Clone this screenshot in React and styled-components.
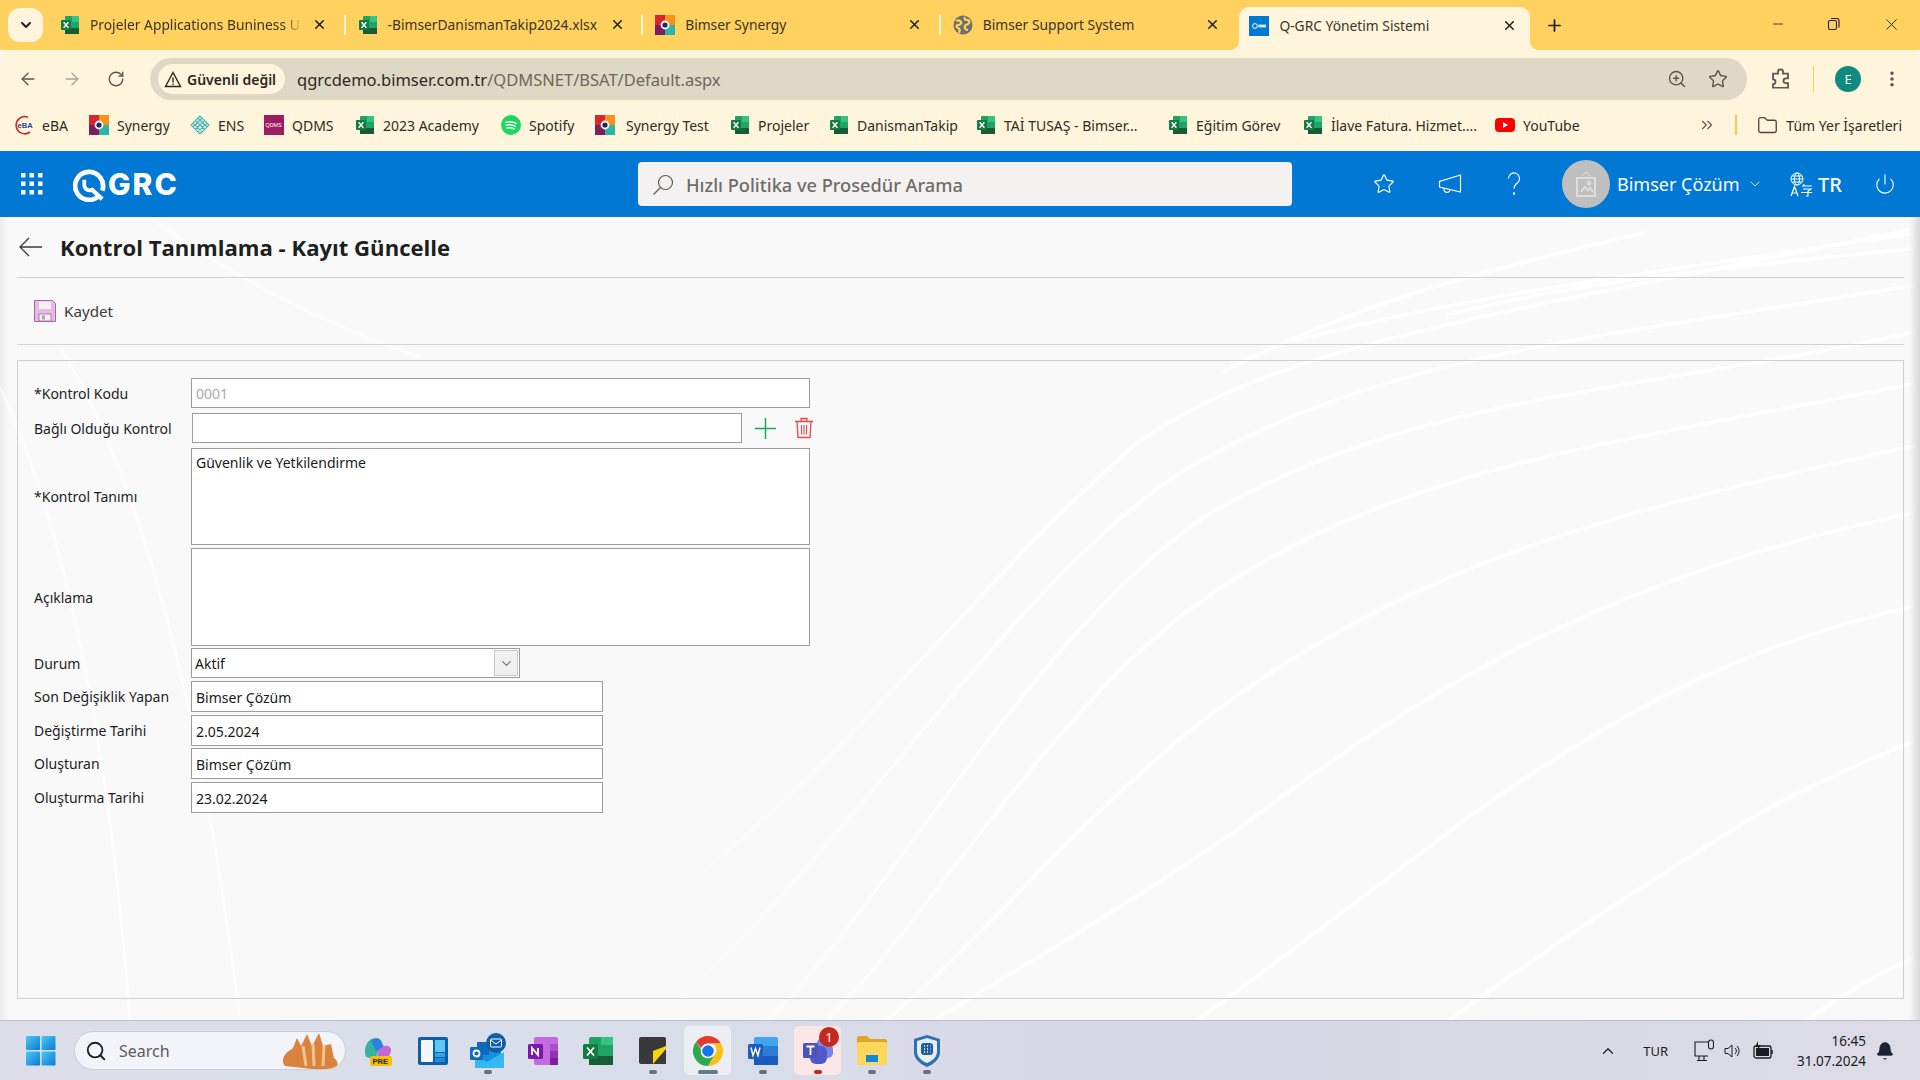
import styled, { createGlobalStyle } from "styled-components";
import { ArrowLeft, ArrowRight, RotateCw, Star, ZoomIn, EllipsisVertical, Folder, ChevronDown, ChevronsRight, ChevronUp, X, Plus, Minus, Power, Bell, Search } from "lucide-react";

const GlobalStyle = createGlobalStyle`
    html, body {
        margin: 0;
        padding: 0;
        width: 1920px;
        height: 1080px;
        overflow: hidden;
        background: #f9f9f9;
    }
    * { box-sizing: border-box; }
`

const chromeFont = `"Noto Sans", "Open Sans", sans-serif`;
const formFont = `"Noto Sans", "Open Sans", sans-serif`;

const Screen = styled.div`
    width: 1920px;
    height: 1080px;
    display: flex;
    flex-direction: column;
    overflow: hidden;
    font-family: ${chromeFont};
    color: #26241f;
`

/* browser tabs */
const TabStrip = styled.div`
    height: 50px;
    flex: none;
    display: flex;
    align-items: flex-end;
    background: #ffd15f;
`

const TabSearch = styled.div`
    width: 35px;
    height: 34px;
    margin: 0 5px 8px 8px;
    border-radius: 12px;
    background: #fff4dc;
    display: flex;
    align-items: center;
    justify-content: center;
`

const Tab = styled.div`
    width: 295.6px;
    height: 43px;
    padding: 0 14px 8px 12px;
    display: flex;
    align-items: center;
    font-size: 13.8px;
`

const TabTitle = styled.span`
    flex: 1;
    min-width: 0;
    margin-left: 10px;
    white-space: nowrap;
    color: #3b3428;
    ${( props ) => props.$fade && `
        margin-right: 10px;
        -webkit-mask-image: linear-gradient(90deg, #000 92%, rgba(0, 0, 0, .15) 100%);
        mask-image: linear-gradient(90deg, #000 92%, rgba(0, 0, 0, .15) 100%);
    `}
`

const TabClose = styled.span`
    width: 20px;
    height: 20px;
    flex: none;
    display: flex;
    align-items: center;
    justify-content: center;
`

const TabSep = styled.span`
    width: 2px;
    height: 20px;
    flex: none;
    margin-bottom: 15px;
    background: #fff4dc;
`

const ActiveTab = styled.div`
    width: 291px;
    height: 43px;
    margin-left: 3px;
    padding: 0 11px 6px 10px;
    display: flex;
    align-items: center;
    position: relative;
    font-size: 13.8px;
    background: #fff4dc;
    border-radius: 10px 10px 0 0;

    &::before, &::after {
        content: '';
        position: absolute;
        bottom: 0;
        width: 10px;
        height: 10px;
    }
    &::before {
        left: -10px;
        background: radial-gradient(circle at 0 0, transparent 10px, #fff4dc 10.5px);
    }
    &::after {
        right: -10px;
        background: radial-gradient(circle at 100% 0, transparent 10px, #fff4dc 10.5px);
    }
`

const NewTab = styled.span`
    width: 24px;
    height: 24px;
    margin: 0 0 13px 12px;
    display: flex;
    align-items: center;
    justify-content: center;
`

const WindowButtons = styled.div`
    margin-left: auto;
    display: flex;
    height: 50px;
`

const WindowButton = styled.span`
    width: ${( props ) => props.$w || 56}px;
    display: flex;
    align-items: center;
    justify-content: center;
    padding-bottom: 2px;
`

/* address bar */
const Toolbar = styled.div`
    height: 58px;
    flex: none;
    padding-top: 8px;
    display: flex;
    align-items: flex-start;
    background: #fff4dc;
    border-radius: 8px 8px 0 0;
`

const NavButton = styled.span`
    width: 44px;
    height: 42px;
    flex: none;
    display: flex;
    align-items: center;
    justify-content: center;
    color: ${( props ) => props.$dim ? '#a8a294' : '#5c574b'};
`

const NavGroup = styled.div`
    display: flex;
    width: 150px;
    padding-left: 6px;
`

const Omnibox = styled.div`
    width: 1597px;
    height: 42px;
    flex: none;
    display: flex;
    align-items: center;
    padding-left: 8px;
    border-radius: 21px;
    background: #dfd8c5;
`

const SecurityChip = styled.div`
    width: 127px;
    height: 30px;
    flex: none;
    display: flex;
    align-items: center;
    gap: 5px;
    padding-left: 6px;
    border-radius: 15px;
    background: #fff4dc;
    font-size: 14px;
    font-weight: 600;
    color: #2a261d;
`

const Url = styled.div`
    margin-left: 12px;
    font-size: 16.5px;
    color: #6c675a;
    white-space: nowrap;

    & b {
        font-weight: 400;
        color: #2e2a22;
    }
`

const OmniIcons = styled.div`
    margin-left: auto;
    display: flex;
    align-items: center;
    gap: 21px;
    padding-right: 19px;
    color: #5c574b;
`

const ToolIcons = styled.div`
    flex: 1;
    display: flex;
    align-items: center;
    height: 42px;
    padding-left: 22px;
    color: #5c574b;
`

const ToolDivider = styled.span`
    width: 1px;
    height: 26px;
    margin: 0 21px 0 20px;
    background: #f5c95f;
`

const ProfileBadge = styled.span`
    width: 26px;
    height: 26px;
    border-radius: 50%;
    background: #0f8a7c;
    color: #fff;
    font-size: 13px;
    display: flex;
    align-items: center;
    justify-content: center;
    margin-right: 21px;
`

/* bookmarks */
const BookmarkBar = styled.div`
    height: 43px;
    flex: none;
    display: flex;
    align-items: center;
    padding: 0 0 9px 14px;
    background: #fff4dc;
    font-size: 14px;
    color: #2f2b22;
`

const Bookmark = styled.div`
    width: ${( props ) => props.$w}px;
    flex: none;
    display: flex;
    align-items: center;
    gap: ${( props ) => props.$gap || 8}px;
    white-space: nowrap;
`

const BookmarkEnd = styled.div`
    margin-left: auto;
    display: flex;
    align-items: center;
    padding-right: 18px;
    white-space: nowrap;
    color: #2f2b22;
`

const BookmarkDivider = styled.span`
    width: 2px;
    height: 20px;
    margin: 0 20px 0 19px;
    background: #f7c958;
`

const FolderLabel = styled.span`
    margin-left: 8px;
`

/* application header */
const AppHeader = styled.header`
    height: 66px;
    flex: none;
    display: flex;
    align-items: center;
    padding-left: 21px;
    background: #0078d4;
    color: #fff;
`

const Logo = styled.div`
    display: flex;
    align-items: center;
    width: 104px;
    margin-left: 30px;
    gap: 2px;
    font-family: Inter, sans-serif;
    font-weight: 800;
    font-size: 30px;
    letter-spacing: 2px;
`

const SearchBox = styled.div`
    width: 654px;
    height: 44px;
    margin-left: 461px;
    padding-left: 14px;
    display: flex;
    align-items: center;
    gap: 12px;
    border-radius: 4px;
    background: #f3f2f1;
    color: #6e6c6a;
    font-size: 18.2px;
    font-weight: 500;
    padding-top: 1px;
`

const HeaderIcon = styled.span`
    display: flex;
    align-items: center;
    justify-content: center;
    margin-left: ${( props ) => props.$ml}px;
`

const Avatar = styled.span`
    width: 48px;
    height: 48px;
    margin-left: 41px;
    border-radius: 50%;
    background: #bfbfbf;
    display: flex;
    align-items: center;
    justify-content: center;
`

const UserName = styled.span`
    margin-left: 7px;
    width: 130px;
    font-size: 18px;
    white-space: nowrap;
`

const LangCode = styled.span`
    margin-left: 5px;
    width: 24px;
    font-size: 20px;
    font-weight: 500;
`

/* page */
const Page = styled.main`
    flex: 1;
    min-height: 0;
    position: relative;
    overflow: hidden;
    background:
        linear-gradient(90deg, #ececec 0, rgba(236, 236, 236, 0) 9px),
        #f9f9f9;

    &::after {
        content: '';
        position: absolute;
        top: 0;
        right: 0;
        bottom: 0;
        width: 11px;
        background: linear-gradient(270deg, #d9d9d9 0, #e4e4e4 4px, rgba(236, 236, 236, 0) 100%);
    }
`

const Waves = styled.svg`
    position: absolute;
    top: 0;
    left: 0;
    width: 1920px;
    height: 804px;
    fill: none;
    filter: blur(.5px);
`

const PageBody = styled.div`
    position: relative;
    z-index: 1;
    padding: 0 16px 0 17px;
`

const TitleRow = styled.div`
    height: 61px;
    display: flex;
    align-items: center;
    gap: 18px;
    padding: 0 0 1px 2px;
    border-bottom: 1px solid #d2d2d2;
`

const PageTitle = styled.h1`
    margin: 0;
    font-family: "Open Sans", sans-serif;
    font-size: 22.1px;
    font-weight: 700;
    color: #201f1e;
    white-space: nowrap;
`

const ActionRow = styled.div`
    height: 67px;
    display: flex;
    align-items: center;
    gap: 8px;
    padding-left: 17px;
    border-bottom: 1px solid #d2d2d2;
    font-size: 15.2px;
    color: #3d3c3a;
`

const FormPanel = styled.section`
    height: 639px;
    margin-top: 15px;
    padding: 17px 0 0 16px;
    border: 1px solid #cfcfcf;
    font-family: ${formFont};
    font-size: 14px;
    color: #1d1d1d;
`

const Row = styled.div`
    display: flex;
    align-items: center;
    height: ${( props ) => props.$h || 30}px;
    margin-top: ${( props ) => props.$mt || 0}px;
`

const Label = styled.label`
    width: 157px;
    flex: none;
    white-space: nowrap;
`

const Field = styled.div`
    width: ${( props ) => props.$w}px;
    height: 100%;
    margin-left: ${( props ) => props.$ml || 0}px;
    padding: ${( props ) => props.$multi ? '4px 4px' : '1px 4px 0'};
    display: flex;
    align-items: ${( props ) => props.$multi ? 'flex-start' : 'center'};
    border: 1px solid #9c9c9c;
    background: #fff;
    color: ${( props ) => props.$muted ? '#a9a9a9' : '#1a1a1a'};
    white-space: nowrap;
`

const SelectField = styled(Field)`
    position: relative;
    padding: 0 1px 0 3px;
    justify-content: space-between;
`

const SelectButton = styled.span`
    width: 24px;
    height: 26px;
    display: flex;
    align-items: center;
    justify-content: center;
    border: 1px solid #c9c9c9;
    background: #f0f0f0;
    color: #7a7a7a;
`

const RowIcon = styled.span`
    display: flex;
    margin-left: ${( props ) => props.$ml}px;
`

/* windows taskbar */
const Taskbar = styled.footer`
    height: 60px;
    flex: none;
    display: flex;
    align-items: center;
    padding-left: 26px;
    border-top: 1px solid #b9bacb;
    background: linear-gradient(90deg, #dcdfea 0%, #d9deea 30%, #d8d8e6 60%, #dcdbe7 100%);
`

const TaskSearch = styled.div`
    width: 272px;
    height: 39px;
    margin-left: 18px;
    padding-left: 10px;
    display: flex;
    align-items: center;
    gap: 12px;
    border-radius: 20px;
    background: #f3f4f9;
    border: 1px solid #c9ccd9;
    font-size: 16px;
    color: #5a5a5f;
    position: relative;
    overflow: hidden;
`

const Doodle = styled.svg`
    position: absolute;
    right: 0;
    top: 0;
`

const TaskApps = styled.div`
    display: flex;
    margin-left: 5px;
    height: 59px;
`

const TaskApp = styled.div`
    width: 54.9px;
    height: 59px;
    position: relative;
    display: flex;
    align-items: center;
    justify-content: center;

    &::before {
        content: '';
        display: ${( props ) => props.$tile ? 'block' : 'none'};
        position: absolute;
        left: 4px;
        right: 4px;
        top: 5px;
        bottom: 5px;
        border-radius: 5px;
        background: ${( props ) => props.$tile};
    }

    & > svg { position: relative; }
`

const RunDot = styled.span`
    position: absolute;
    left: 50%;
    bottom: 6px;
    width: ${( props ) => props.$w || 8}px;
    height: 4px;
    transform: translateX(-50%);
    border-radius: 2px;
    background: ${( props ) => props.$color || '#6b6f7b'};
`

const CountBadge = styled.span`
    position: absolute;
    top: 6px;
    right: 6px;
    width: 20px;
    height: 20px;
    border-radius: 50%;
    background: #c4281f;
    color: #fff;
    font-size: 13px;
    display: flex;
    align-items: center;
    justify-content: center;
`

const Tray = styled.div`
    margin-left: auto;
    display: flex;
    align-items: center;
    font-size: 13px;
    color: #1c1c22;
    padding-right: 25px;
`

const TrayText = styled.span`
    margin: 0 ${( props ) => props.$mr}px 0 ${( props ) => props.$ml}px;
`

const TrayIcon = styled.svg`
    margin-left: ${( props ) => props.$ml || 0}px;
`

const Clock = styled.div`
    margin: 0 9px 0 23px;
    text-align: right;
    line-height: 20px;
    font-size: 13.5px;
`

/* small drawings */
const IconSvg = styled.svg`
    flex: none;
`

const XlsIcon = ( { size = 20 } ) => (
    <IconSvg width={size} height={size} viewBox="0 0 20 20">
        <rect x="5" y="1" width="14" height="18" rx="1" fill="#21a366" />
        <rect x="12" y="1" width="7" height="6" fill="#33c481" />
        <rect x="5" y="13" width="14" height="6" fill="#185c37" />
        <rect x="1" y="5" width="10" height="10" rx="1" fill="#107c41" />
        <path d="M3.6 7.2 8.4 12.8M8.4 7.2 3.6 12.8" stroke="#fff" strokeWidth="1.4" />
    </IconSvg>
)

const SynergyIcon = () => (
    <IconSvg width="20" height="20" viewBox="0 0 20 20">
        <rect width="10" height="10" fill="#d8262c" />
        <rect x="10" width="10" height="10" fill="#f5921e" />
        <rect y="10" width="10" height="10" fill="#7a1f5c" />
        <rect x="10" y="10" width="10" height="10" fill="#2bb5a8" />
        <circle cx="10" cy="10" r="4.4" fill="#fff" />
        <circle cx="10" cy="10" r="2.6" fill="#1d2a55" />
    </IconSvg>
)

const EbaIcon = () => (
    <IconSvg width="20" height="20" viewBox="0 0 20 20">
        <path d="M14 2.2A8.6 8.6 0 1 0 16 17" fill="none" stroke="#c9252c" strokeWidth="1.6" />
        <text x="3.6" y="13" fontSize="7.6" fontWeight="700" fill="#1f4b8e" fontFamily="Liberation Sans">eBA</text>
    </IconSvg>
)

const EnsIcon = () => (
    <IconSvg width="20" height="20" viewBox="0 0 20 20" stroke="#3fb3bd" strokeWidth="1.1">
        <path d="M10 1 1 10l9 9 9-9zM5.5 5.5l9 9M8 3l9 9M3 8l9 9M14.5 5.5l-9 9M12 3l-9 9M17 8l-9 9" fill="none" />
    </IconSvg>
)

const QdmsIcon = () => (
    <IconSvg width="20" height="20" viewBox="0 0 20 20">
        <rect width="20" height="20" fill="#9b1d60" />
        <text x="1.5" y="12" fontSize="5.4" fill="#fff" fontFamily="Liberation Sans">QDMS</text>
    </IconSvg>
)

const SpotifyIcon = () => (
    <IconSvg width="20" height="20" viewBox="0 0 20 20">
        <circle cx="10" cy="10" r="10" fill="#1ed760" />
        <path d="M4.6 7.4c3.6-1 7.4-.7 10.6 1M5.3 10.3c3-.8 6.2-.5 8.9 1M6 13c2.4-.6 4.9-.3 7.1.9" fill="none" stroke="#fff" strokeWidth="1.5" strokeLinecap="round" />
    </IconSvg>
)

const YoutubeIcon = () => (
    <IconSvg width="20" height="20" viewBox="0 0 20 20">
        <rect y="3" width="20" height="14" rx="4" fill="#f00" />
        <path d="M8 7v6l5-3z" fill="#fff" />
    </IconSvg>
)

const GlobeIcon = () => (
    <IconSvg width="20" height="20" viewBox="0 0 20 20">
        <circle cx="10" cy="10" r="9.5" fill="#6f6f6f" />
        <path d="M3 6c2-1 4-.4 5 1s-1 3-3 3-2 2 0 3 2 3 1 5M12 2c-1 2 0 3 2 3s3 1 2 3-3 1-4 3 1 4 3 4" fill="none" stroke="#ffd15f" strokeWidth="2.2" />
    </IconSvg>
)

const GrcFavicon = () => (
    <IconSvg width="20" height="20" viewBox="0 0 20 20">
        <rect width="20" height="20" fill="#0078d4" />
        <circle cx="6" cy="10" r="2.4" fill="none" stroke="#fff" strokeWidth="1" />
        <rect x="9.4" y="8.6" width="7.6" height="2.8" fill="#dcecf8" />
    </IconSvg>
)

const bookmarks = [
    { icon: <EbaIcon />, text: 'eBA', w: 75 },
    { icon: <SynergyIcon />, text: 'Synergy', w: 101 },
    { icon: <EnsIcon />, text: 'ENS', w: 74 },
    { icon: <QdmsIcon />, text: 'QDMS', w: 91 },
    { icon: <XlsIcon />, text: '2023 Academy', w: 146 },
    { icon: <SpotifyIcon />, text: 'Spotify', w: 94 },
    { icon: <SynergyIcon />, text: 'Synergy Test', w: 135, gap: 11 },
    { icon: <XlsIcon />, text: 'Projeler', w: 99 },
    { icon: <XlsIcon />, text: 'DanismanTakip', w: 147 },
    { icon: <XlsIcon />, text: 'TAİ TUSAŞ - Bimser...', w: 192 },
    { icon: <XlsIcon />, text: 'Eğitim Görev', w: 135 },
    { icon: <XlsIcon />, text: 'İlave Fatura. Hizmet....', w: 192 },
    { icon: <YoutubeIcon />, text: 'YouTube', w: 100 },
];

const tabs = [
    { icon: <XlsIcon />, title: 'Projeler Applications Buniness U', fade: true },
    { icon: <XlsIcon />, title: '-BimserDanismanTakip2024.xlsx' },
    { icon: <SynergyIcon />, title: 'Bimser Synergy' },
    { icon: <GlobeIcon />, title: 'Bimser Support System' },
];

const fields = [
    { label: 'Son Değişiklik Yapan', value: 'Bimser Çözüm', mt: 3, h: 31 },
    { label: 'Değiştirme Tarihi', value: '2.05.2024', mt: 3, h: 31 },
    { label: 'Oluşturan', value: 'Bimser Çözüm', mt: 2, h: 31 },
    { label: 'Oluşturma Tarihi', value: '23.02.2024', mt: 3, h: 31 },
];

const wavePaths = [
    'M380 300C600 170 800 110 1100 30',
    'M500 240C800 150 1100 110 1568 30',
    'M760 190C1000 120 1300 90 1568 60',
    'M-900 1540C-400 1300 -150 820 230 440C480 240 850 190 1568 20',
    'M-600 1560C-300 1300 0 730 300 500C650 260 1000 240 1568 130',
    'M-400 1560C-200 1340 60 800 350 580C700 340 1100 340 1568 220',
    'M-300 1560C-150 1400 60 1000 300 780C640 480 1050 440 1568 320',
    'M-200 1560C-60 1440 180 1100 400 930C760 640 1100 560 1568 440',
    'M-120 1560C40 1450 220 1330 400 1190C760 880 1060 690 1568 570',
    'M330 1560C500 1420 660 1280 800 1160C1100 920 1300 820 1568 750',
    'M760 1560C900 1440 1100 1290 1300 1150C1400 1090 1480 1050 1568 1010',
    'M1370 1560C1440 1500 1500 1460 1568 1430',
];

export default function App () {
    return (
        <Screen>
            <GlobalStyle />
            <TabStrip>
                <TabSearch><ChevronDown size={16} strokeWidth={3} color="#1f1f1f" /></TabSearch>
                {tabs.map(( tab, i ) => (
                    <div key={tab.title} style={{ display: 'contents' }}>
                        <Tab>
                            {tab.icon}
                            <TabTitle $fade={tab.fade}>{tab.title}</TabTitle>
                            <TabClose><X size={15} strokeWidth={2.4} color="#1f1f1f" /></TabClose>
                        </Tab>
                        {i < 3 && <TabSep />}
                    </div>
                ))}
                <ActiveTab>
                    <GrcFavicon />
                    <TabTitle>Q-GRC Yönetim Sistemi</TabTitle>
                    <TabClose><X size={15} strokeWidth={2.4} color="#1f1f1f" /></TabClose>
                </ActiveTab>
                <NewTab><Plus size={19} strokeWidth={2.2} color="#1f1f1f" /></NewTab>
                <WindowButtons>
                    <WindowButton><Minus size={16} strokeWidth={1.2} color="#222" /></WindowButton>
                    <WindowButton>
                        <svg width="14" height="14" viewBox="0 0 14 14" fill="none" stroke="#222" strokeWidth="1.1">
                            <rect x="1.5" y="3.5" width="8" height="9" rx="1.5" />
                            <path d="M4 1.5h6a2 2 0 0 1 2 2v7" />
                        </svg>
                    </WindowButton>
                    <WindowButton $w={58}><X size={19} strokeWidth={1.2} color="#222" /></WindowButton>
                </WindowButtons>
            </TabStrip>

            <Toolbar>
                <NavGroup>
                    <NavButton><ArrowLeft size={20} strokeWidth={1.6} /></NavButton>
                    <NavButton $dim><ArrowRight size={20} strokeWidth={1.6} /></NavButton>
                    <NavButton><RotateCw size={18} strokeWidth={1.8} /></NavButton>
                </NavGroup>
                <Omnibox>
                    <SecurityChip>
                        <svg width="18" height="17" viewBox="0 0 18 17" fill="none" stroke="#2a261d" strokeWidth="1.4">
                            <path d="M9 1.5 1.5 15.5h15z" />
                            <path d="M9 6.5v5M9 12.5v1.4" />
                        </svg>
                        Güvenli değil
                    </SecurityChip>
                    <Url><b>qgrcdemo.bimser.com.tr</b>/QDMSNET/BSAT/Default.aspx</Url>
                    <OmniIcons>
                        <ZoomIn size={20} strokeWidth={1.7} />
                        <Star size={20} strokeWidth={1.7} />
                    </OmniIcons>
                </Omnibox>
                <ToolIcons>
                    <svg width="24" height="24" viewBox="0 0 24 24" fill="none" stroke="#5c574b" strokeWidth="1.8">
                        <path d="M4 6h5V4a2.5 2.5 0 0 1 5 0v2h5v5h-2a2.5 2.5 0 0 0 0 5h2v5H4v-4a2.5 2.5 0 0 0 0-5V6z" transform="translate(0 1) scale(1 .94)" />
                    </svg>
                    <ToolDivider />
                    <ProfileBadge>E</ProfileBadge>
                    <EllipsisVertical size={20} strokeWidth={2.2} />
                </ToolIcons>
            </Toolbar>

            <BookmarkBar>
                {bookmarks.map(( item ) => (
                    <Bookmark key={item.text} $w={item.w} $gap={item.gap}>{item.icon}{item.text}</Bookmark>
                ))}
                <BookmarkEnd>
                    <ChevronsRight size={18} strokeWidth={1.5} color="#5c574b" />
                    <BookmarkDivider />
                    <Folder size={21} strokeWidth={1.5} color="#4d483d" />
                    <FolderLabel>Tüm Yer İşaretleri</FolderLabel>
                </BookmarkEnd>
            </BookmarkBar>

            <AppHeader>
                <svg width="22" height="22" viewBox="0 0 22 22" fill="#fff">
                    {[0, 8.5, 17].flatMap(( y ) => [0, 8.5, 17].map(( x ) => (
                        <rect key={`${x}-${y}`} x={x} y={y} width="4.5" height="4.5" />
                    )))}
                </svg>
                <Logo>
                    <svg width="33" height="35" viewBox="0 0 35 35" fill="none" stroke="#fff" style={{ flex: 'none' }}>
                        <path d="M27.5 29.5A14.8 14.8 0 1 1 31 24" strokeWidth="5" />
                        <path d="M12 12.5v6a5.5 5.5 0 0 0 8 4.6" strokeWidth="4" />
                        <path d="M19 22l12 11" strokeWidth="4.5" />
                    </svg>
                    GRC
                </Logo>
                <SearchBox>
                    <svg width="22" height="22" viewBox="0 0 22 22" fill="none" stroke="#5f5e5c" strokeWidth="1.2">
                        <circle cx="13.5" cy="8.5" r="7" />
                        <path d="M8.5 13.5 1.5 20.5" />
                    </svg>
                    Hızlı Politika ve Prosedür Arama
                </SearchBox>
                <HeaderIcon $ml={81}><Star size={22} strokeWidth={1.3} /></HeaderIcon>
                <HeaderIcon $ml={43}>
                    <svg width="24" height="22" viewBox="0 0 24 22" fill="none" stroke="#fff" strokeWidth="1.2">
                        <path d="M22.5 2v17L1.5 14V8.5z" />
                        <path d="M6 15.5a3 3 0 0 0 6 1.6" />
                    </svg>
                </HeaderIcon>
                <HeaderIcon $ml={45}>
                    <svg width="14" height="24" viewBox="0 0 14 24" fill="none" stroke="#fff" strokeWidth="1.2">
                        <path d="M1.5 6.5a5.5 5.5 0 1 1 9 4.2C8.4 12.4 7 13.6 7 16.5" />
                        <circle cx="7" cy="21.5" r=".6" />
                    </svg>
                </HeaderIcon>
                <Avatar>
                    <svg width="24" height="28" viewBox="0 0 24 28" fill="none" stroke="#dedede" strokeWidth="2">
                        <rect x="3" y="8" width="18" height="18" />
                        <path d="M7 22l4-5 3 3 2-2 3 4" />
                        <circle cx="15" cy="13" r="1.4" />
                        <path d="M8 6l4-4 4 4" strokeWidth="1" />
                    </svg>
                </Avatar>
                <UserName>Bimser Çözüm</UserName>
                <ChevronDown size={16} strokeWidth={1.2} />
                <HeaderIcon $ml={27}>
                    <svg width="23" height="25" viewBox="0 0 23 25" fill="none" stroke="#fff" strokeWidth="1">
                        <circle cx="7" cy="7" r="6" />
                        <ellipse cx="7" cy="7" rx="2.6" ry="6" />
                        <path d="M1 7h12M2 4h10M2 10h10" />
                        <path d="M1 24l3.5-9.5L8 24M2.2 21h4.6" strokeWidth="1.2" />
                        <path d="M12 14h10M13 17h8l-3 2v5h-2M11 20.5h11M14 12v2" strokeWidth="1.1" />
                    </svg>
                </HeaderIcon>
                <LangCode>TR</LangCode>
                <HeaderIcon $ml={32}><Power size={22} strokeWidth={1.2} /></HeaderIcon>
            </AppHeader>

            <Page>
                <Waves viewBox="0 0 1920 804">
                    <defs>
                        <linearGradient id="waveFade" gradientUnits="userSpaceOnUse" x1="-700" y1="0" x2="100" y2="0">
                            <stop offset="0" stopColor="#fff" stopOpacity="0" />
                            <stop offset="1" stopColor="#fff" />
                        </linearGradient>
                    </defs>
                    <g transform="translate(1000 0) scale(.587 .5165)" stroke="url(#waveFade)">
                        {wavePaths.map(( d ) => (
                            <path key={d} d={d} strokeWidth="3.5" vectorEffect="non-scaling-stroke" />
                        ))}
                    </g>
                    <path d="M150 0C230 60 330 110 420 140M60 130C140 260 200 480 240 804M0 170C70 320 110 540 130 804" stroke="#fff" strokeWidth="3" opacity=".6" />
                </Waves>
                <PageBody>
                    <TitleRow>
                        <svg width="23" height="20" viewBox="0 0 23 20" fill="none" stroke="#3a3a3a" strokeWidth="1.3" style={{ flex: 'none' }}>
                            <path d="M23 10H1M10 1 1 10l9 9" />
                        </svg>
                        <PageTitle>Kontrol Tanımlama - Kayıt Güncelle</PageTitle>
                    </TitleRow>
                    <ActionRow>
                        <svg width="22" height="22" viewBox="0 0 22 22">
                            <path d="M.5.5h18l3 3v18H.5z" fill="#dfbede" stroke="#b25fb0" />
                            <rect x="5" y="1.5" width="12" height="7.5" fill="#f7eff7" />
                            <rect x="5" y="14" width="12" height="7" fill="#f7eff7" stroke="#b25fb0" strokeWidth=".8" />
                            <rect x="8" y="15.5" width="3" height="4" fill="#a9a9a9" />
                        </svg>
                        Kaydet
                    </ActionRow>
                    <FormPanel>
                        <Row>
                            <Label>*Kontrol Kodu</Label>
                            <Field $w={619} $muted>0001</Field>
                        </Row>
                        <Row $mt={5}>
                            <Label>Bağlı Olduğu Kontrol</Label>
                            <Field $w={550} $ml={1} />
                            <RowIcon $ml={13}>
                                <svg width="21" height="21" viewBox="0 0 21 21" stroke="#1ea756" strokeWidth="1.5">
                                    <path d="M10.5 0v21M0 10.5h21" />
                                </svg>
                            </RowIcon>
                            <RowIcon $ml={18}>
                                <svg width="20" height="22" viewBox="0 0 20 22" fill="none" stroke="#f0454b" strokeWidth="1.3">
                                    <path d="M1 4.5h18M7 4V1.5h6V4M3 4.5 4 20.5h12l1-16" />
                                    <path d="M7.5 8v9.5M10 8v9.5M12.5 8v9.5" strokeWidth="1.1" />
                                </svg>
                            </RowIcon>
                        </Row>
                        <Row $h={97} $mt={5}>
                            <Label>*Kontrol Tanımı</Label>
                            <Field $w={619} $multi>Güvenlik ve Yetkilendirme</Field>
                        </Row>
                        <Row $h={98} $mt={3}>
                            <Label>Açıklama</Label>
                            <Field $w={619} $multi />
                        </Row>
                        <Row $mt={2}>
                            <Label>Durum</Label>
                            <SelectField $w={329}>
                                Aktif
                                <SelectButton><ChevronDown size={15} strokeWidth={2} /></SelectButton>
                            </SelectField>
                        </Row>
                        {fields.map(( item ) => (
                            <Row key={item.label} $h={item.h} $mt={item.mt}>
                                <Label>{item.label}</Label>
                                <Field $w={412}>{item.value}</Field>
                            </Row>
                        ))}
                    </FormPanel>
                </PageBody>
            </Page>

            <Taskbar>
                <svg width="30" height="30" viewBox="0 0 30 30">
                    <defs>
                        <linearGradient id="win" x1="0" y1="0" x2="1" y2="1">
                            <stop offset="0" stopColor="#4fc8f5" />
                            <stop offset="1" stopColor="#0a78d8" />
                        </linearGradient>
                    </defs>
                    <rect x="0" y="0" width="14" height="14" rx="1" fill="url(#win)" />
                    <rect x="15.5" y="0" width="14" height="14" rx="1" fill="url(#win)" />
                    <rect x="0" y="15.5" width="14" height="14" rx="1" fill="url(#win)" />
                    <rect x="15.5" y="15.5" width="14" height="14" rx="1" fill="url(#win)" />
                </svg>
                <TaskSearch>
                    <Search size={22} strokeWidth={2} color="#202020" />
                    Search
                    <Doodle width="66" height="39" viewBox="0 0 66 39">
                        <path d="M6 34C0 26 8 20 14 16L18 6l4 8 6-12 5 12 7-13 4 13 8-2 3 14c6 4 4 12-4 13z" fill="#d9833e" />
                        <path d="M24 14l3 20M34 12l1 22M45 14l-1 20" stroke="#f2c58e" strokeWidth="3" />
                    </Doodle>
                </TaskSearch>
                <TaskApps>
                    <TaskApp>
                        <svg width="32" height="32" viewBox="0 0 32 32">
                            <path d="M4 22C1 14 5 3 14 3c4 0 5 2 6 5l-7 16z" fill="#35b2a4" />
                            <path d="M9 6c3-3 8-3 10 0l4 8-9 2z" fill="#2f7fe0" />
                            <path d="M14 26c8 2 14-3 15-11 0-3-3-5-6-4l-6 3z" fill="#c468d0" />
                            <rect x="8" y="21" width="22" height="10" rx="2" fill="#f6c000" />
                            <text x="10.5" y="29" fontSize="7.5" fontWeight="700" fill="#222" fontFamily="Liberation Sans">PRE</text>
                        </svg>
                    </TaskApp>
                    <TaskApp>
                        <svg width="30" height="28" viewBox="0 0 30 28">
                            <rect width="30" height="28" rx="2" fill="#0f5fa8" />
                            <rect x="3" y="3" width="12" height="22" rx="1" fill="#f5f7fb" />
                            <rect x="17" y="3" width="10" height="12" fill="#5cc8f5" />
                            <rect x="17" y="16" width="10" height="4" fill="#2ea6e8" />
                            <rect x="17" y="21" width="10" height="4" fill="#1c8ed8" />
                        </svg>
                    </TaskApp>
                    <TaskApp>
                        <svg width="36" height="36" viewBox="0 0 36 36">
                            <rect x="7" y="9" width="24" height="26" fill="#1490df" />
                            <rect x="7" y="9" width="12" height="13" fill="#0f6cbd" />
                            <path d="M7 35V22l12 7 17-10v16z" fill="#35b8f1" transform="translate(-2 0)" />
                            <rect x="0" y="14" width="13" height="13" rx="1" fill="#0f6cbd" />
                            <circle cx="6.5" cy="20.5" r="3" fill="none" stroke="#fff" strokeWidth="1.8" />
                            <circle cx="26" cy="10" r="10" fill="#0f5fa8" />
                            <rect x="20.5" y="6" width="11" height="8" rx="1" fill="none" stroke="#fff" strokeWidth="1" />
                            <path d="M20.5 7 26 11l5.5-4" fill="none" stroke="#fff" strokeWidth="1" />
                        </svg>
                        <RunDot />
                    </TaskApp>
                    <TaskApp>
                        <svg width="30" height="28" viewBox="0 0 30 28">
                            <rect x="6" y="0" width="24" height="28" rx="2" fill="#c26ae0" />
                            <rect x="22" y="7" width="8" height="7" fill="#a94fc9" />
                            <rect x="22" y="14" width="8" height="7" fill="#9333b8" />
                            <rect x="22" y="21" width="8" height="7" fill="#7b1fa2" />
                            <rect x="0" y="7" width="15" height="15" rx="1.5" fill="#7719aa" />
                            <path d="M4 18v-7l6 7v-7" fill="none" stroke="#fff" strokeWidth="1.8" />
                        </svg>
                    </TaskApp>
                    <TaskApp>
                        <svg width="30" height="28" viewBox="0 0 30 28">
                            <rect x="6" y="0" width="24" height="28" rx="2" fill="#21a366" />
                            <rect x="18" y="0" width="12" height="8" fill="#33c481" />
                            <rect x="6" y="19" width="24" height="9" fill="#185c37" />
                            <rect x="0" y="7" width="15" height="15" rx="1.5" fill="#107c41" />
                            <path d="M4 10.5l7 8M11 10.5l-7 8" stroke="#fff" strokeWidth="1.8" />
                        </svg>
                    </TaskApp>
                    <TaskApp>
                        <svg width="27" height="27" viewBox="0 0 27 27">
                            <rect width="27" height="27" rx="2" fill="#393939" />
                            <path d="M14 27V14L27 9v16a2 2 0 0 1-2 2z" fill="#f7d308" />
                            <path d="M14 27 27 12V27z" fill="#393939" />
                        </svg>
                        <RunDot />
                    </TaskApp>
                    <TaskApp $tile="#eceef4">
                        <svg width="30" height="30" viewBox="0 0 30 30">
                            <path d="M15 0a15 15 0 0 1 13 7.5H15a7.5 7.5 0 0 0-7 4.7L3.4 5.5A15 15 0 0 1 15 0z" fill="#e33b2e" />
                            <path d="M28 7.5A15 15 0 0 1 15 30l6.5-11.2A7.5 7.5 0 0 0 22 9.5 7 7 0 0 0 15 7.5z" fill="#fbc116" />
                            <path d="M3.4 5.5 8.8 15a7.5 7.5 0 0 0 12.7 3.8L15 30A15 15 0 0 1 3.4 5.5z" fill="#2da94f" />
                            <circle cx="15" cy="15" r="7.3" fill="#fff" />
                            <circle cx="15" cy="15" r="5.8" fill="#1a73e8" />
                        </svg>
                        <RunDot $w={20} $color="#5f7d8c" />
                    </TaskApp>
                    <TaskApp>
                        <svg width="30" height="28" viewBox="0 0 30 28">
                            <rect x="6" y="0" width="24" height="28" rx="2" fill="#41a5ee" />
                            <rect x="6" y="9" width="24" height="10" fill="#2b7cd3" />
                            <rect x="6" y="19" width="24" height="9" fill="#185abd" />
                            <rect x="0" y="7" width="15" height="15" rx="1.5" fill="#1e5fbd" />
                            <path d="M3 10.5l2 8 2.5-7 2.5 7 2-8" fill="none" stroke="#fff" strokeWidth="1.4" />
                        </svg>
                        <RunDot />
                    </TaskApp>
                    <TaskApp $tile="#fbe7e7">
                        <svg width="30" height="26" viewBox="0 0 30 26">
                            <rect x="14" y="6" width="16" height="14" rx="5" fill="#7b83eb" />
                            <circle cx="19" cy="5" r="5" fill="#7b83eb" />
                            <rect x="7" y="8" width="17" height="18" rx="6" fill="#5059c9" />
                            <rect x="0" y="5" width="15" height="15" rx="1.5" fill="#4b53bc" />
                            <path d="M3.5 8.5h8M7.5 8.5V17" stroke="#fff" strokeWidth="1.8" />
                        </svg>
                        <CountBadge>1</CountBadge>
                        <RunDot $color="#c4281f" />
                    </TaskApp>
                    <TaskApp>
                        <svg width="30" height="29" viewBox="0 0 30 29">
                            <path d="M0 2a2 2 0 0 1 2-2h8l3 3h15a2 2 0 0 1 2 2v4H0z" fill="#e0a526" />
                            <rect y="6" width="30" height="23" rx="2" fill="#fbd75b" />
                            <rect x="9" y="19" width="12" height="7" fill="#0f87d8" />
                        </svg>
                        <RunDot />
                    </TaskApp>
                    <TaskApp>
                        <svg width="26" height="32" viewBox="0 0 26 32">
                            <path d="M13 0 26 4v13c0 7-6 12-13 15C6 29 0 24 0 17V4z" fill="#2f6fb2" />
                            <path d="M13 3 23 6v11c0 5-5 9-10 11C8 26 3 22 3 17V6z" fill="#e5edf5" />
                            <rect x="7" y="8" width="12" height="12" rx="3" fill="#1e5f9e" />
                            <path d="M10 11h1M13 11h1M16 11h.5M10 14h1M13 14h1M16 14h.5M10 17h1M13 17h1M16 17h.5" stroke="#fff" strokeWidth="1.5" />
                        </svg>
                        <RunDot />
                    </TaskApp>
                </TaskApps>
                <Tray>
                    <ChevronUp size={18} strokeWidth={1.6} />
                    <TrayText $ml={26} $mr={26}>TUR</TrayText>
                    <TrayIcon width="20" height="24" viewBox="0 0 20 24" fill="none" stroke="#1c1c22" strokeWidth="1.1">
                        <path d="M14 3H1v14h13M5 17v4M10 17v4M3 21.5h10" />
                        <rect x="14.5" y="1" width="5" height="9" rx="2.5" />
                    </TrayIcon>
                    <TrayIcon $ml={10} width="18" height="18" viewBox="0 0 18 18" fill="none" stroke="#1c1c22" strokeWidth="1">
                        <path d="M1 6.5h3L8 3v12l-4-3.5H1zM11 6a4 4 0 0 1 0 6M13 4a7 7 0 0 1 0 10" />
                    </TrayIcon>
                    <TrayIcon $ml={10} width="22" height="20" viewBox="0 0 22 20">
                        <rect x="2" y="5" width="17" height="12" rx="2" fill="none" stroke="#1c1c22" strokeWidth="1.3" />
                        <rect x="4" y="7" width="13" height="8" fill="#1c1c22" />
                        <path d="M20 9v4" stroke="#1c1c22" strokeWidth="1.5" />
                        <path d="M6 0 3 6h3l-1 4 4-6H6z" fill="#1c1c22" />
                    </TrayIcon>
                    <Clock>16:45<br />31.07.2024</Clock>
                    <Bell size={20} fill="#1c2238" strokeWidth={1} />
                </Tray>
            </Taskbar>
        </Screen>
    )
}
